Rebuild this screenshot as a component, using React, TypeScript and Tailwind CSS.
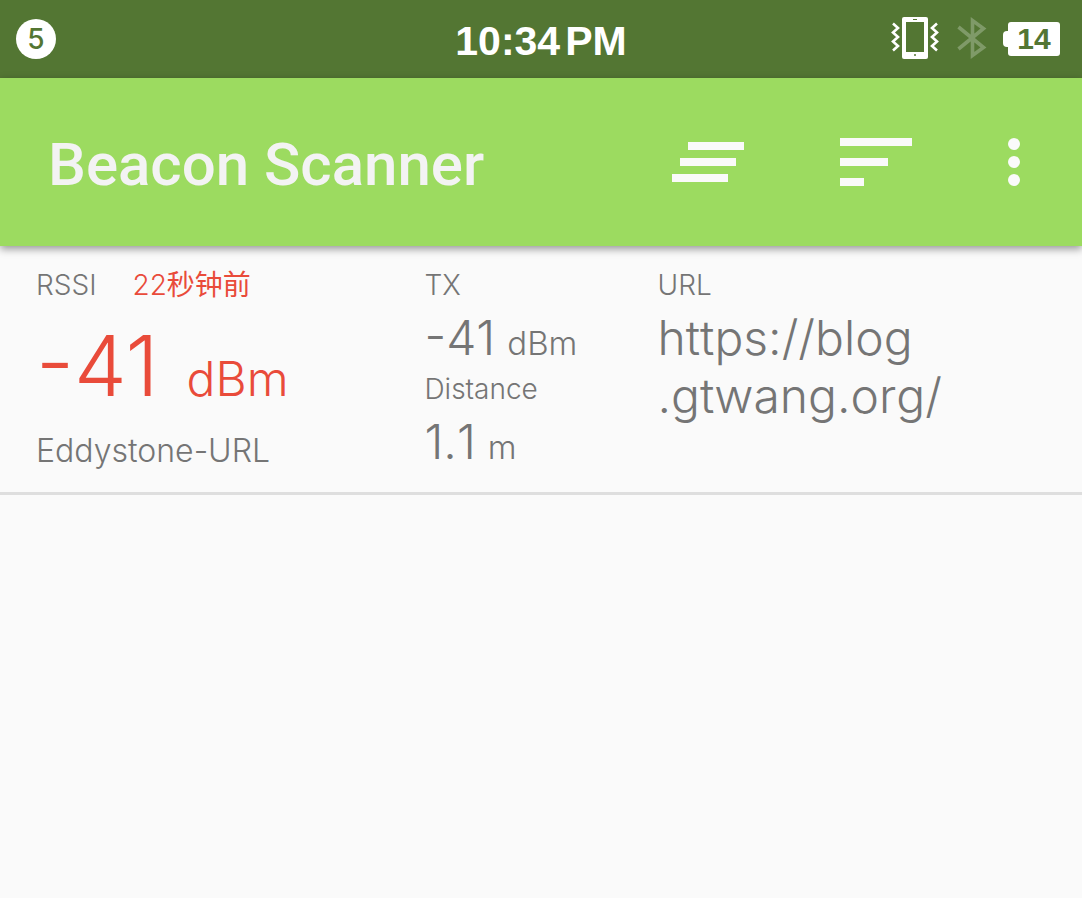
import type { ReactNode } from "react";

function StatusBar() {
  return (
    <div className="grid h-[78px] grid-cols-3 items-center bg-[#537633] px-4 text-white">
      <div className="flex size-10 items-center justify-center rounded-full bg-white font-['Inter',sans-serif] text-[28px] leading-none font-medium text-[#537633]">
        5
      </div>
      <time className="flex gap-[5px] justify-self-center pt-1 font-['Liberation_Sans',Arial,sans-serif] text-[41px] leading-none font-bold whitespace-nowrap">
        <span>10:34</span> <span>PM</span>
      </time>
      <div className="flex items-center gap-4 justify-self-end pr-[6px]">
        <VibrateIcon />
        <BluetoothIcon />
        <Battery level={14} />
      </div>
    </div>
  );
}

function VibrateIcon() {
  return (
    <svg viewBox="0 0 48 44" className="mr-[2px] h-11 w-12" aria-label="Vibrate">
      <rect x="11" y="0" width="26" height="42" rx="2" fill="#fff" />
      <rect x="15" y="5" width="18" height="30" fill="#537633" />
      <path d="M22 2.500h4" stroke="#537633" strokeWidth="1" />
      <circle cx="24" cy="38" r="1" fill="#537633" />
      <path
        d="M2 6.500l5 4.500-5 4.500 5 4.500-5 4.500 5 4.500-5 4.500M46 6.500l-5 4.500 5 4.500-5 4.500 5 4.500-5 4.500 5 4.500"
        fill="none"
        stroke="#fff"
        strokeWidth="2.600"
      />
    </svg>
  );
}

function BluetoothIcon() {
  return (
    <svg viewBox="0 0 30 44" className="h-11 w-[30px]" aria-label="Bluetooth">
      <path
        d="M1.500 10L26.500 30.500 15.500 38.500V3.500L26.500 11.500 1.500 32"
        fill="none"
        stroke="#7f9a68"
        strokeWidth="3.600"
      />
    </svg>
  );
}

function Battery({ level }: { level: number }) {
  return (
    <div className="flex items-center" aria-label={`Battery ${level}%`}>
      <span className="h-4 w-[5px] rounded-l bg-white" />
      <span className="flex h-[34px] w-[52px] items-center justify-center rounded-[3px] bg-white font-['Liberation_Sans',Arial,sans-serif] text-[30px] leading-none font-bold text-[#537633]">
        {level}
      </span>
    </div>
  );
}

function ToolButton({ label, children }: { label: string; children: ReactNode }) {
  return (
    <button type="button" aria-label={label} className="flex h-24 items-center justify-center">
      <svg viewBox="0 0 96 96" className="size-24" fill="#fafafa">
        {children}
      </svg>
    </button>
  );
}

function AppBar() {
  return (
    <header className="relative flex h-[168px] items-center justify-between bg-[#9cdb60] pr-5 pl-12 shadow-[0_3px_8px_rgba(0,0,0,0.4)]">
      <h1 className="pt-[6px] font-['Roboto',sans-serif] text-[60px] leading-none font-medium whitespace-nowrap text-[#f3f3f3]">
        Beacon Scanner
      </h1>
      <div className="flex items-center">
        <div className="flex gap-[72px]">
          <ToolButton label="Clear all">
            <path d="M28 28h56v8H28zM20 44h56v8H20zM12 60h56v8H12z" />
          </ToolButton>
          <ToolButton label="Sort">
            <path d="M12 24h72v8H12zM12 44h48v8H12zM12 64h24v8H12z" />
          </ToolButton>
        </div>
        <div className="pl-[42px]">
          <ToolButton label="More options">
            <circle cx="48" cy="30" r="6" />
            <circle cx="48" cy="48" r="6" />
            <circle cx="48" cy="66" r="6" />
          </ToolButton>
        </div>
      </div>
    </header>
  );
}

function Label({ children }: { children: ReactNode }) {
  return <dt className="text-[28px] leading-8">{children}</dt>;
}

function Value({ children, unit }: { children: ReactNode; unit?: string }) {
  return (
    <dd className="mt-2 text-[48px] leading-[58px] [font-kerning:none]">
      {children}
      {unit && <span className="ml-3 text-[33px] leading-none">{unit}</span>}
    </dd>
  );
}

function BeaconRow() {
  return (
    <li className="grid grid-cols-[5fr_3fr_5fr] border-b-3 border-[#dedede] px-9 pt-[23px] pb-[21px]">
      <div>
        <dl>
          <dt className="flex gap-9 text-[28px] leading-8">
            RSSI
            <span className="text-[#e94b3a]">
              22<span className="font-normal">秒钟前</span>
            </span>
          </dt>
          <dd className="mt-[23px] flex items-baseline gap-7 text-[84px] leading-[84px] text-[#e94b3a]">
            -41
            <span className="text-[48px] leading-none">dBm</span>
          </dd>
        </dl>
        <p className="mt-[23px] text-[32px] leading-10">Eddystone-URL</p>
      </div>
      <dl>
        <Label>TX</Label>
        <Value unit="dBm">-41</Value>
        <div className="mt-[6px]">
          <Label>Distance</Label>
          <Value unit="m">1.1</Value>
        </div>
      </dl>
      <dl>
        <Label>URL</Label>
        <Value>
          <a href="https://blog.gtwang.org/">
            https://blog
            <wbr />
            .gtwang.org/
          </a>
        </Value>
      </dl>
    </li>
  );
}

export default function App() {
  return (
    <div className="flex min-h-screen flex-col bg-[#fafafa]">
      <StatusBar />
      <AppBar />
      <main>
        <ul className="font-['Inter','Noto_Sans_CJK_SC',sans-serif] font-light text-[#757575]">
          <BeaconRow />
        </ul>
      </main>
    </div>
  );
}
